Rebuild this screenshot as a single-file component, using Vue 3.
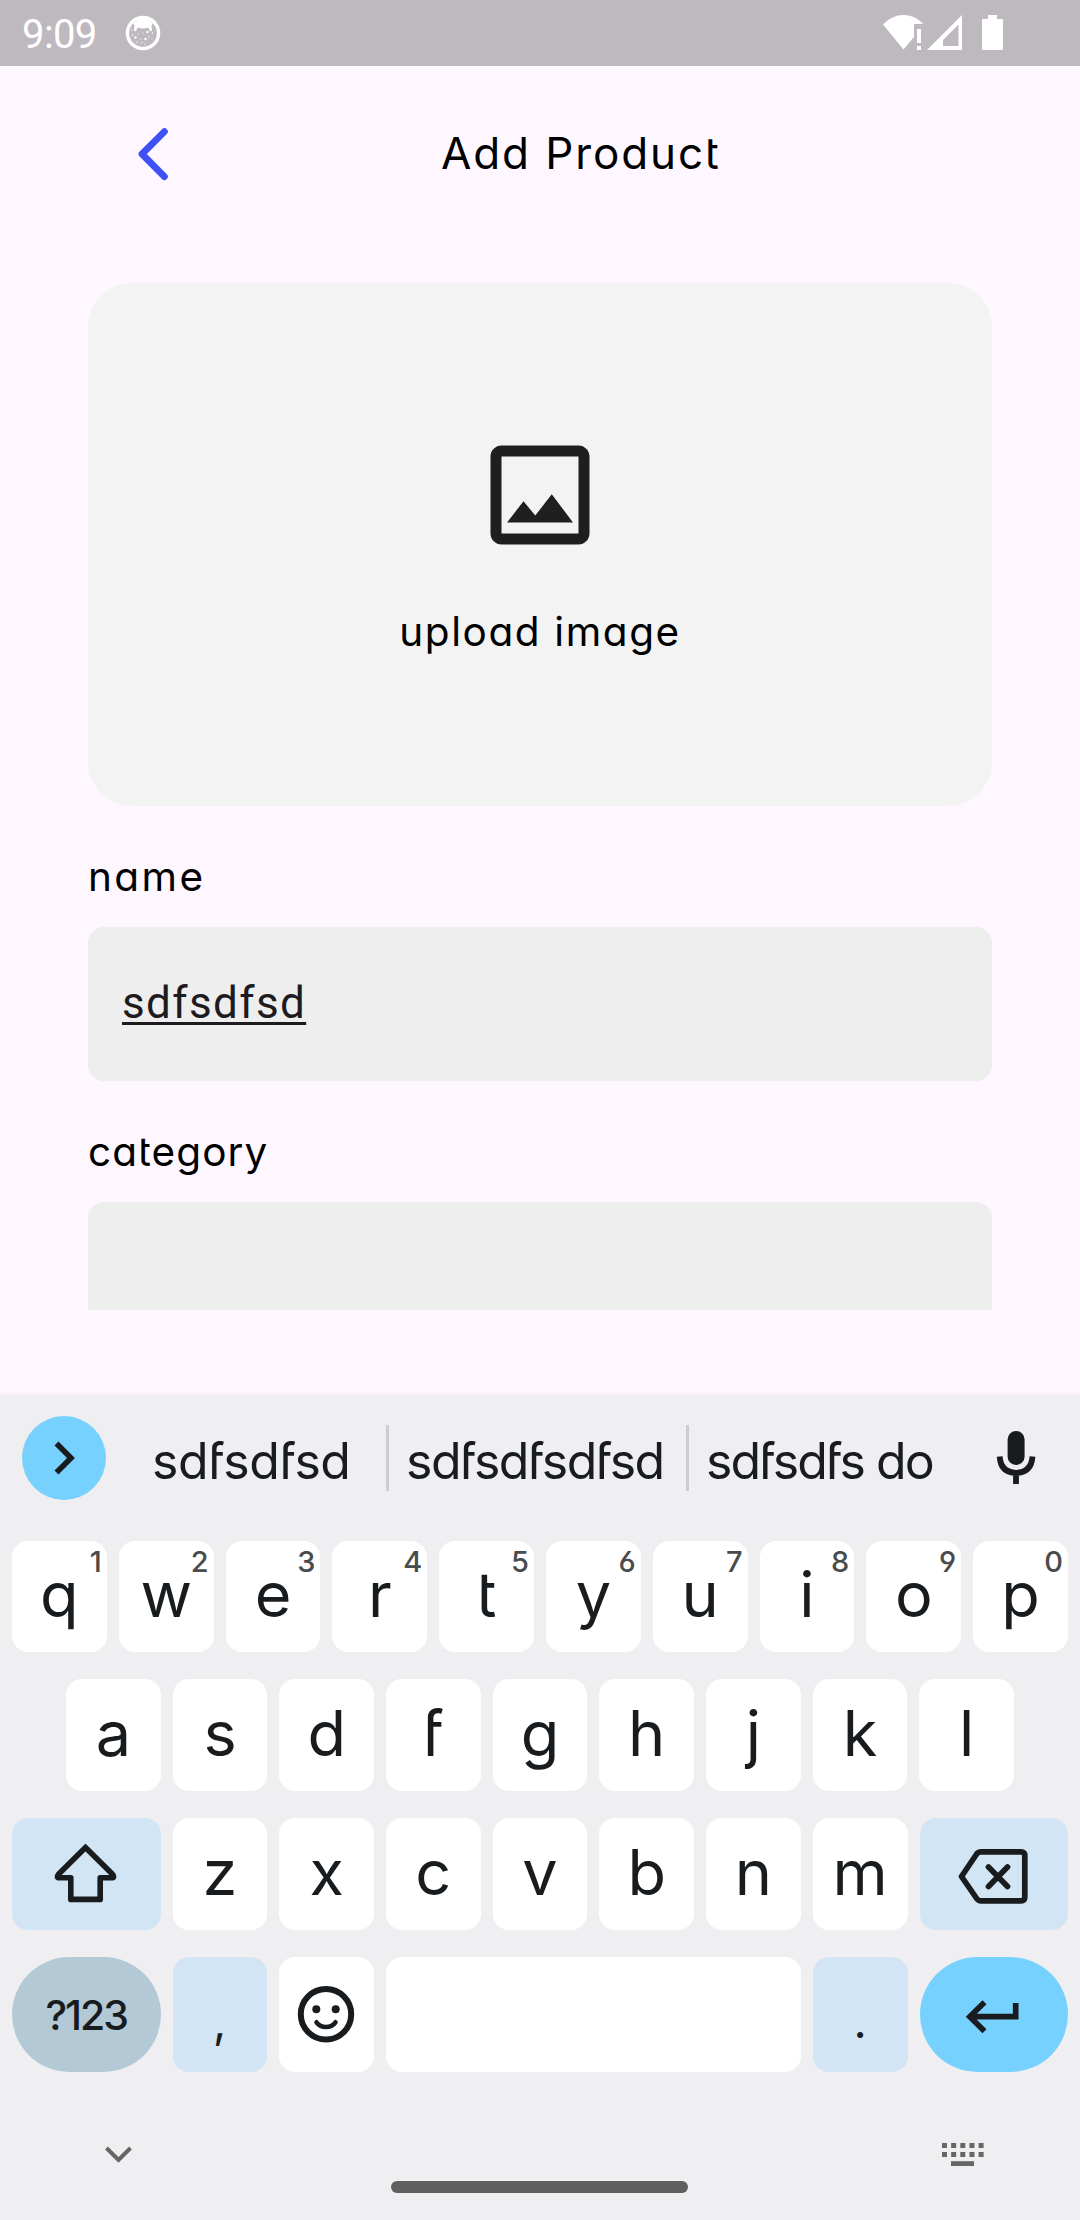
<script setup>
const topRow = [...'qwertyuiop'].map((letter, i) => ({ letter, hint: (i + 1) % 10 }))
const middleRow = [...'asdfghjkl']
const bottomRow = [...'zxcvbnm']
const dotColumns = [0, 9.15, 18.3, 27.45, 36.6]
</script>

<template>
  <div class="screen">
    <div class="status">
      <span class="clock">9:09</span>
      <svg class="debug-icon" width="36" height="36" viewBox="0 0 36 36">
        <circle cx="18" cy="18" r="15.6" fill="none" stroke="#fff" stroke-width="3.4" />
        <path d="M8 8.5Q18-2 28 8.500L26.500 10.500L27 15.500L25.500 16.500L23 12.500Q18 14.500 13 12.500L10.500 16.500L9 15.500L9.500 10.500Z" fill="#fff" />
        <g fill="#fff">
          <circle cx="10.500" cy="22.500" r="1.200" /><circle cx="22.500" cy="17" r="1.200" />
          <circle cx="20.500" cy="24" r="1.200" /><circle cx="18" cy="18" r=".6" />
          <circle cx="13.500" cy="19" r=".6" /><circle cx="15.500" cy="24" r=".6" />
          <circle cx="24" cy="22" r=".7" /><circle cx="27" cy="24" r=".6" />
          <circle cx="12" cy="27" r=".7" /><circle cx="17" cy="27.500" r=".7" />
          <circle cx="20" cy="29" r=".6" /><circle cx="7.500" cy="20" r=".7" />
          <circle cx="27.500" cy="18" r=".7" /><circle cx="7" cy="15" r=".7" />
        </g>
      </svg>
      <svg class="system-icons" width="122" height="40" viewBox="882 13 122 40" fill="#fff">
        <path d="M883 24.500Q891.500 15 903.500 15Q915 15 923.300 24H914V37L903.500 49.500Z" />
        <path d="M917 29h4v14h-4zM917 46h4v4h-4z" />
        <path fill-rule="evenodd" d="M927 50L962 15V50ZM943 40V46H958.500V24.500Z" />
        <path d="M988 15h9v4h5q1 0 1 1v29q0 1-1 1h-19q-1 0-1-1V20q0-1 1-1h5z" />
      </svg>
    </div>

    <header class="header">
      <svg class="back" width="44" height="60" viewBox="0 0 44 60">
        <path d="M34.400 7.600L12 30L34.400 52.700" fill="none" stroke="#3d51f5" stroke-width="6.800" stroke-linecap="round" stroke-linejoin="round" />
      </svg>
      <h1 class="title">Add Product</h1>
    </header>

    <main class="form">
      <div class="upload">
        <svg width="132" height="132" viewBox="0 0 24 24" fill="#1f1f1f">
          <path d="M19 5v14H5V5h14m0-2H5c-1.100 0-2 .9-2 2v14c0 1.100.9 2 2 2h14c1.100 0 2-.9 2-2V5c0-1.100-.9-2-2-2zm-4.860 8.860l-3 3.870L9 13.140 6 17h12l-3.860-5.140z" />
        </svg>
        <span class="caption">upload image</span>
      </div>
      <label class="label name">name</label>
      <div class="field"><span class="value">sdfsdfsd</span></div>
      <label class="label category">category</label>
      <div class="field"></div>
    </main>

    <section class="keyboard">
      <div class="suggestions">
        <button class="expand">
          <svg width="84" height="84" viewBox="0 0 84 84"><path d="M34.500 27.500L49 42L34.500 56.500" fill="none" stroke="#191c1e" stroke-width="5.600" /></svg>
        </button>
        <span class="word first">sdfsdfsd</span>
        <i class="divider"></i>
        <span class="word second">sdfsdfsdfsd</span>
        <i class="divider"></i>
        <span class="word third">sdfsdfs do</span>
        <svg class="mic" width="44" height="60" viewBox="0 0 44 60">
          <rect x="13.600" y="3" width="17" height="34" rx="8.500" fill="#191c1e" />
          <path d="M5.700 28.500Q6.500 44.500 22 44.800Q37.500 44.500 38.500 28.500M22 45V56" fill="none" stroke="#191c1e" stroke-width="5.800" />
        </svg>
      </div>

      <div class="row row-top">
        <button v-for="k in topRow" :key="k.letter" class="key">
          {{ k.letter }}<span class="hint">{{ k.hint }}</span>
        </button>
      </div>
      <div class="row row-middle">
        <button v-for="k in middleRow" :key="k" class="key">{{ k }}</button>
      </div>
      <div class="row">
        <button class="key wide tonal">
          <svg width="148" height="112" viewBox="0 0 148 112">
            <path d="M73.500 29.500L46.500 56.300Q43.800 59.800 47.500 59.800H58.800V81.400H88.200V59.800H99.500Q103.200 59.800 100.500 56.300Z" fill="none" stroke="#191c1e" stroke-width="5.600" stroke-linejoin="round" />
            <path d="M70 30.500L73.500 25.500L77 30.500Z" fill="#191c1e" />
          </svg>
        </button>
        <button v-for="k in bottomRow" :key="k" class="key">{{ k }}</button>
        <button class="key wide tonal">
          <svg width="148" height="112" viewBox="0 0 148 112" fill="none" stroke="#191c1e" stroke-width="5.700" stroke-linecap="round" stroke-linejoin="round">
            <path d="M41.500 58.500L57 35.500Q58.500 33.800 60.500 33.800H101Q104.800 33.800 104.800 37.500V79Q104.800 82.800 101 82.800H60.500Q58.500 82.800 57 81Z" />
            <path d="M68.500 49L87.500 68.500M87.500 49L68.500 68.500" />
          </svg>
        </button>
      </div>
      <div class="row row-space">
        <button class="key wide symbols">?123</button>
        <button class="key narrow tonal punct comma">,</button>
        <button class="key narrow">
          <svg width="60" height="60" viewBox="0 0 60 60" fill="none" stroke="#191c1e" stroke-linecap="round">
            <circle cx="30" cy="29.300" r="25.200" stroke-width="6" />
            <circle cx="20.300" cy="24.300" r="4" fill="#191c1e" stroke="none" />
            <circle cx="39.700" cy="24.300" r="4" fill="#191c1e" stroke="none" />
            <path d="M20.500 37.300Q24 42 30 42Q36 42 39.500 37.300" stroke-width="4.600" />
          </svg>
        </button>
        <button class="key space"></button>
        <button class="key narrow tonal punct period">.</button>
        <button class="key wide enter">
          <svg width="148" height="115" viewBox="0 0 148 115" fill="none" stroke="#191c1e" stroke-width="5.700">
            <path d="M95.700 46V59.700H50M64.500 45.300L49.800 59.700L64.500 74.300" />
          </svg>
        </button>
      </div>

      <div class="nav">
        <svg class="hide" width="32" height="24" viewBox="0 0 32 24"><path d="M4.500 5L16.500 17L28.500 5" fill="none" stroke="#666" stroke-width="4" /></svg>
        <i class="home"></i>
        <svg class="switch" width="44" height="24" viewBox="0 0 44 24" fill="#666">
          <g v-for="x in dotColumns" :key="x">
            <rect :x="x" y="0" width="5" height="5" /><rect :x="x" y="9" width="5" height="5" />
          </g>
          <rect x="9" y="18.200" width="23" height="4.800" />
        </svg>
      </div>
    </section>
  </div>
</template>

<style>
body { margin: 0; background: #fef7ff; }
</style>

<style scoped>
.screen { width: 1080px; height: 2220px; overflow: hidden; background: #fef7ff; color: #000; font-family: Inter, sans-serif; display: flex; flex-direction: column; box-sizing: border-box; }
.screen svg { display: block; flex: none; }
.status { height: 66px; background: #beb8bf; display: flex; align-items: center; color: #fff; }
.clock { width: 102px; margin-left: 22px; font: 400 40px/63px Roboto, sans-serif; letter-spacing: -0.6px; padding-top: 3px; height: 66px; box-sizing: border-box; }
.debug-icon { margin-left: 1px; }
.system-icons { margin-left: auto; margin-right: 76px; }

.header { height: 176px; display: flex; align-items: center; }
.back { margin-left: 130px; }
.title { margin: 0 0 3px 267px; font-size: 44px; font-weight: 400; line-height: 60px; letter-spacing: 1.9px; font-feature-settings: "cv11", "cv12", "cv13"; white-space: nowrap; }

.form { height: 1027px; padding: 41px 88px 0; overflow: hidden; display: flex; flex-direction: column; }
.upload { height: 523px; flex: none; background: #f3f3f3; border-radius: 44px; display: flex; flex-direction: column; align-items: center; box-sizing: border-box; padding-top: 146px; }
.caption { margin-top: 41px; font-size: 40.5px; line-height: 60px; letter-spacing: 1.600px; font-feature-settings: "cv11"; }
.label { height: 121px; flex: none; box-sizing: border-box; padding-top: 20px; line-height: 101px; font-size: 40.5px; font-feature-settings: "cv11", "cv13"; }
.name { letter-spacing: 2.4px; }
.category { letter-spacing: 1.100px; }
.field { height: 154px; flex: none; box-sizing: border-box; background: #eee; border-radius: 16px; padding: 0 34px 2px; display: flex; align-items: center; }
.value { font: 400 44px/60px Roboto, sans-serif; letter-spacing: 1.375px; color: #1d1b20; text-decoration: underline; text-decoration-thickness: 2.5px; text-underline-offset: 4px; text-decoration-skip-ink: none; }

.keyboard { margin-top: 86px; height: 824px; background: #efeff2; box-shadow: 0 0 7px rgba(60, 50, 70, 0.1); display: flex; flex-direction: column; font-feature-settings: "cv03", "cv04", "cv12", "cv13"; color: #191c1e; }
.suggestions { height: 145px; flex: none; padding-top: 20px; box-sizing: border-box; display: flex; align-items: flex-start; }
button { border: 0; padding: 0; margin: 0; font: inherit; color: inherit; font-feature-settings: inherit; }
.expand { width: 84px; height: 84px; border-radius: 42px; background: #76d1ff; margin-left: 22px; flex: none; }
.word { height: 84px; line-height: 90px; font-size: 50px; white-space: nowrap; flex: none; box-sizing: border-box; }
.first { width: 280px; padding-left: 46px; letter-spacing: -0.4px; }
.second { width: 297px; padding-left: 17px; letter-spacing: -1.5px; }
.third { width: 305px; padding-left: 17px; letter-spacing: -1.9px; }
.divider { width: 3px; height: 66px; margin-top: 9px; background: #cdcdcf; flex: none; }
.mic { margin-top: 12px; }

.row { height: 112px; margin-bottom: 27px; padding: 0 12px; display: flex; gap: 12px; flex: none; }
.row-top { height: 111px; }
.row-middle { padding: 0 66px; }
.row-space { height: 115px; margin-bottom: 0; }
.key { position: relative; flex: 1 1 0; min-width: 0; height: 100%; background: #fff; border-radius: 16px; display: flex; align-items: center; justify-content: center; box-sizing: border-box; font-size: 63px; line-height: 80px; padding-bottom: 5px; }
.key:has(svg) { padding-bottom: 0; }
.hint { position: absolute; top: 3px; right: 5px; font-size: 29px; font-weight: 500; line-height: 36px; color: #494b4d; }
.wide { flex: 0 0 148.500px; }
.narrow { flex: 0 0 94.500px; }
.tonal { background: #d2e5f4; }
.symbols { background: #b3c9d6; border-radius: 58px; font-size: 41px; font-weight: 500; padding: 0; letter-spacing: -2px; }
.punct { font-size: 46px; padding-bottom: 0; padding-top: 12px; }
.enter { background: #76d1ff; border-radius: 58px; }

.nav { flex: 1; display: flex; align-items: flex-start; }
.hide { margin: 71px 0 0 102px; }
.home { width: 297px; height: 12px; border-radius: 6px; background: #5f5f5f; margin: 109px 0 0 257px; }
.switch { margin: 71px 0 0 254px; }
</style>
